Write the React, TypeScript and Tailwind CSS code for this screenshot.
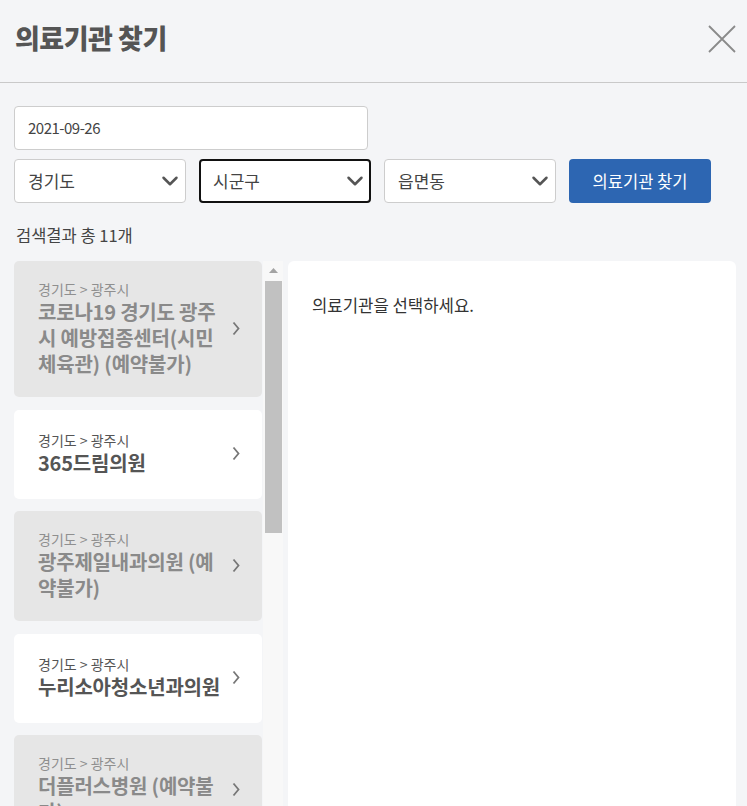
import { ChevronDown } from 'lucide-react';
import { Fragment } from 'react';

type Clinic = {
  id: number;
  region: string;
  lines: string[];
  disabled: boolean;
};

const clinics: Clinic[] = [
  { id: 1, region: '경기도 > 광주시', lines: ['코로나19 경기도 광주', '시 예방접종센터(시민', '체육관) (예약불가)'], disabled: true },
  { id: 2, region: '경기도 > 광주시', lines: ['365드림의원'], disabled: false },
  { id: 3, region: '경기도 > 광주시', lines: ['광주제일내과의원 (예', '약불가)'], disabled: true },
  { id: 4, region: '경기도 > 광주시', lines: ['누리소아청소년과의원'], disabled: false },
  { id: 5, region: '경기도 > 광주시', lines: ['더플러스병원 (예약불', '가)'], disabled: true }
];

const SelectBox = ({ label, focused }: { label: string; focused?: boolean }) => (
  <div
    className={
      focused
        ? 'flex h-[44px] w-[172px] items-center justify-between rounded-[4px] border-2 border-[#111] bg-white pl-[12px] pr-[1px]'
        : 'flex h-[44px] w-[172px] items-center justify-between rounded-[4px] border border-[#cdcdcd] bg-white pl-[13px] pr-[2px]'
    }
  >
    <span className="text-[17px] text-[#444]">{label}</span>
    <ChevronDown className="h-[26px] w-[26px] text-[#555]" strokeWidth={2.3} />
  </div>
);

const ClinicCard = ({ clinic }: { clinic: Clinic }) => (
  <div
    className={`flex min-h-[89px] shrink-0 items-center rounded-[5px] pt-[18px] pb-[20px] pl-[24px] pr-[22px] ${
      clinic.disabled ? 'bg-[#e6e6e6]' : 'bg-white'
    }`}
  >
    <div className="flex-1">
      <p className={`text-[14px] leading-[20px] ${clinic.disabled ? 'text-[#8f8f8f]' : 'text-[#555]'}`}>
        {clinic.region}
      </p>
      <p
        className={`whitespace-nowrap text-[20px] leading-[26px] font-bold tracking-[-0.2px] ${
          clinic.disabled ? 'text-[#8a8a8a]' : 'text-[#555]'
        }`}
      >
        {clinic.lines.map((line, i) => (
          <Fragment key={line}>
            {i > 0 && <br />}
            {line}
          </Fragment>
        ))}
      </p>
    </div>
    <svg width="8" height="15" viewBox="0 0 8 15" className="shrink-0">
      <polyline points="1.5,1.5 6.5,7.5 1.5,13.5" fill="none" stroke="#777" strokeWidth="1.8" />
    </svg>
  </div>
);

export default function App() {
  return (
    <div className="h-screen overflow-hidden bg-[#f4f5f7] font-['Noto_Sans_CJK_KR',sans-serif] text-[#333]">
      <header className="flex h-[83px] items-center justify-between border-b border-[#c9c9c9] pb-[5px] pl-[15px] pr-[11px]">
        <h1 className="text-[27px] font-black tracking-[-0.5px] text-[#555]">의료기관 찾기</h1>
        <svg width="28" height="28" viewBox="0 0 28 28">
          <path d="M1 1 L27 27 M27 1 L1 27" stroke="#8a8a8a" strokeWidth="1.8" fill="none" />
        </svg>
      </header>

      <div className="pl-[14px] pr-[11px] pt-[23px]">
        <div className="flex h-[44px] w-[354px] items-center rounded-[4px] border border-[#cdcdcd] bg-white pl-[13px]">
          <span className="text-[15px] tracking-[-0.5px] text-[#444]">2021-09-26</span>
        </div>

        <div className="mt-[9px] flex gap-[13px]">
          <SelectBox label="경기도" />
          <SelectBox label="시군구" focused />
          <SelectBox label="읍면동" />
          <button className="h-[44px] w-[142px] rounded-[4px] bg-[#2d66b2] text-[16.5px] text-white">
            의료기관 찾기
          </button>
        </div>

        <p className="mt-[20px] pl-[2px] text-[16.5px] leading-[24px] text-[#444]">검색결과 총 11개</p>

        <div className="mt-[14px] flex h-[580px]">
          <div className="flex w-[248px] flex-col gap-[12.5px] overflow-hidden">
            {clinics.map((clinic) => (
              <ClinicCard key={clinic.id} clinic={clinic} />
            ))}
          </div>

          <div className="ml-[1px] flex w-[20px] flex-col bg-[#f8f8f8] px-[2px]">
            <div className="flex h-[20px] items-start justify-center pt-[7px]">
              <svg width="9" height="5" viewBox="0 0 9 5">
                <polygon points="0,5 4.5,0 9,5" fill="#a3a3a3" />
              </svg>
            </div>
            <div className="h-[252px] w-[17px] bg-[#c1c1c1]" />
          </div>

          <div className="ml-[5px] flex-1 rounded-[6px] bg-white pl-[24px] pt-[32px]">
            <p className="text-[16.7px] leading-[24px] text-[#333]">의료기관을 선택하세요.</p>
          </div>
        </div>
      </div>
    </div>
  );
}
